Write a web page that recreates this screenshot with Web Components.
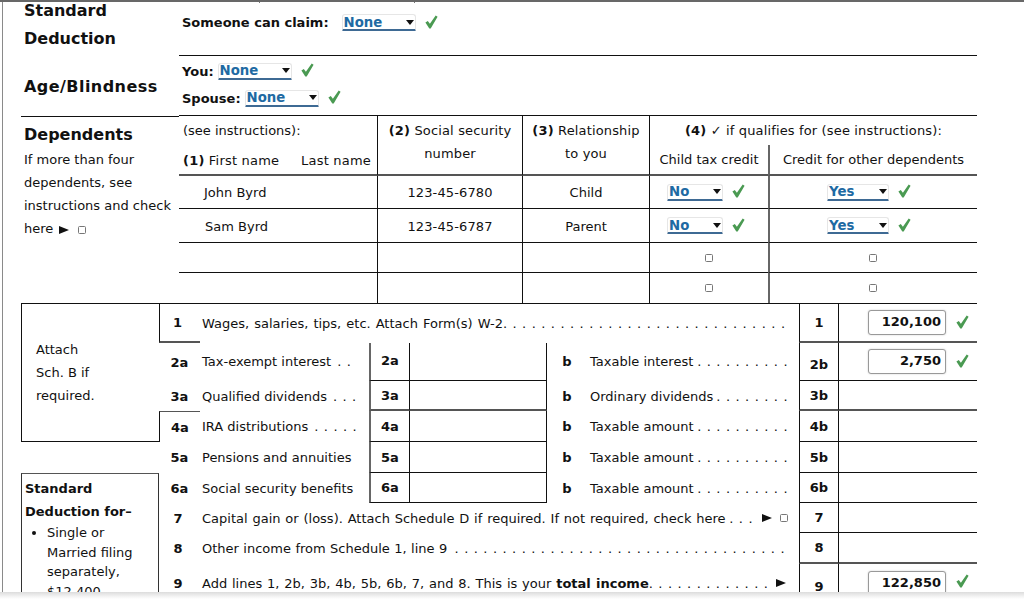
<!DOCTYPE html>
<html lang="en"><head><meta charset="utf-8"><title>Form 1040</title>
<style>
html,body{margin:0;padding:0;background:#fff}
body{font:13px/23px "DejaVu Sans",Verdana,sans-serif;color:#111}
</style></head><body>
<tax-page>
  <form-grid kind="upper">
    <form-cell style="grid-area:1/1/2/2;padding-bottom:8px"><sect-title>Standard<br>Deduction</sect-title></form-cell>
    <form-cell style="grid-area:1/2/2/7;padding-bottom:12px" b="b"><tax-claim>Someone can claim:</tax-claim><tax-select style="width:74px;margin-left:13px">None</tax-select><green-check style="margin-left:9px"></green-check></form-cell>
    <form-cell style="grid-area:2/1/3/2;padding-top:2px"><sect-title style="letter-spacing:.45px">Age/Blindness</sect-title></form-cell>
    <form-cell style="grid-area:2/2/3/7;padding-bottom:2px" b="b">
      <claim-pair><claim-row><tax-claim>You:</tax-claim><tax-select style="width:74px;margin-left:4px">None</tax-select><green-check style="margin-left:9px"></green-check></claim-row>
      <claim-row><tax-claim>Spouse:</tax-claim><tax-select style="width:74px;margin-left:4px">None</tax-select><green-check style="margin-left:9px"></green-check></claim-row></claim-pair>
    </form-cell>

    <form-cell style="grid-area:3/1/8/2" b="t" align="top"><dep-side><sect-title>Dependents</sect-title><span>If more than four<br>dependents, see<br>instructions and check<br>here <tri-mark style="margin-left:2px"></tri-mark><check-box style="margin-left:9px"></check-box></span></dep-side></form-cell>

    <form-cell style="grid-area:3/2/5/3" g="b" align="top"><name-head><span>(see instructions):</span><name-line><span><b>(1)</b>&nbsp;First name</span><span>Last name</span></name-line></name-head></form-cell>
    <form-cell style="grid-area:3/3/5/4" l="1" g="b" center align="top"><col-head><b>(2)</b> Social security<br>number</col-head></form-cell>
    <form-cell style="grid-area:3/4/5/5" l="1" g="b" center align="top"><col-head><b>(3)</b> Relationship<br>to you</col-head></form-cell>
    <form-cell style="grid-area:3/5/4/7;letter-spacing:.15px" l="1" center><b>(4)</b>&nbsp;✓&nbsp;if qualifies for (see instructions):</form-cell>
    <form-cell style="grid-area:4/5/5/6" l="1" g="b" center>Child tax credit</form-cell>
    <form-cell style="grid-area:4/6/5/7" gl="1" g="b" center>Credit for other dependents</form-cell>

    <form-cell style="grid-area:5/2/6/3" b="b" pad="25">John Byrd</form-cell>
    <form-cell style="grid-area:5/3/6/4;letter-spacing:.12px" l="1" b="b" center>123-45-6780</form-cell>
    <form-cell style="grid-area:5/4/6/5" l="1" b="b" center>Child</form-cell>
    <form-cell style="grid-area:5/5/6/6;padding-right:6px" l="1" b="b" center><tax-select style="width:56px">No</tax-select><green-check style="margin-left:9px"></green-check></form-cell>
    <form-cell style="grid-area:5/6/6/7;padding-right:9px" gl="1" b="b" center><tax-select style="width:62px">Yes</tax-select><green-check style="margin-left:9px"></green-check></form-cell>

    <form-cell style="grid-area:6/2/7/3;padding-top:1px" b="b" pad="26">Sam Byrd</form-cell>
    <form-cell style="grid-area:6/3/7/4;padding-top:1px;letter-spacing:.12px" l="1" b="b" center>123-45-6787</form-cell>
    <form-cell style="grid-area:6/4/7/5;padding-top:1px" l="1" b="b" center>Parent</form-cell>
    <form-cell style="grid-area:6/5/7/6;padding-right:6px" l="1" b="b" center><tax-select style="width:56px">No</tax-select><green-check style="margin-left:9px"></green-check></form-cell>
    <form-cell style="grid-area:6/6/7/7;padding-right:9px" gl="1" b="b" center><tax-select style="width:62px">Yes</tax-select><green-check style="margin-left:9px"></green-check></form-cell>

    <form-cell style="grid-area:7/2/8/3" b="b"></form-cell>
    <form-cell style="grid-area:7/3/8/4" l="1" b="b"></form-cell>
    <form-cell style="grid-area:7/4/8/5" l="1" b="b"></form-cell>
    <form-cell style="grid-area:7/5/8/6" l="1" b="b" center><check-box></check-box></form-cell>
    <form-cell style="grid-area:7/6/8/7;padding-right:2px" gl="1" b="b" center><check-box></check-box></form-cell>

    <form-cell style="grid-area:8/2/9/3"></form-cell>
    <form-cell style="grid-area:8/3/9/4" l="1"></form-cell>
    <form-cell style="grid-area:8/4/9/5" l="1"></form-cell>
    <form-cell style="grid-area:8/5/9/6" l="1" center><check-box></check-box></form-cell>
    <form-cell style="grid-area:8/6/9/7;padding-right:2px" gl="1" center><check-box></check-box></form-cell>
  </form-grid>

  <form-grid kind="lower">
    <form-cell style="grid-area:1/1/5/2" b="t l b" pad="14"><span>Attach<br>Sch. B if<br>required.</span></form-cell>
    <form-cell style="grid-area:6/1/11/2" g="t" gx="1" pad="3" align="top"><std-box><b>Standard<br>Deduction for–</b><ul-like>Single or<br>Married filing<br>separately,<br>$12,400</ul-like></std-box></form-cell>

    <form-cell style="grid-area:1/2/2/3;padding-right:5px" b="t l" g="b" center num>1</form-cell>
    <form-cell style="grid-area:1/3/2/8;word-spacing:.9px" b="t" pad="2" fill="14"><span>Wages, salaries, tips, etc. Attach Form(s) W-2</span><dot-run n="30"></dot-run></form-cell>
    <form-cell style="grid-area:1/8/2/9" b="t l r" g="b" center num>1</form-cell>
    <form-cell style="grid-area:1/9/2/10" b="t" g="b" pad="29"><amount-box>120,100</amount-box><green-check style="margin-left:10px"></green-check></form-cell>

    <form-cell style="grid-area:2/2/3/3" center num>2a</form-cell>
    <form-cell style="grid-area:2/3/3/4;padding-bottom:2px" pad="2"><span>Tax-exempt interest</span><dot-run n="2" style="margin-left:6px"></dot-run></form-cell>
    <form-cell style="grid-area:2/4/3/5;padding-bottom:2px" gl="1" b="b" center num>2a</form-cell>
    <form-cell style="grid-area:2/5/3/6" l="1" r="1" b="b"></form-cell>
    <form-cell style="grid-area:2/6/3/7;padding-bottom:2px" center num>b</form-cell>
    <form-cell style="grid-area:2/7/3/8;padding-bottom:2px" pad="3" fill="11"><span>Taxable interest</span><dot-run n="10"></dot-run></form-cell>
    <form-cell style="grid-area:2/8/3/9" b="l r b" center num low>2b</form-cell>
    <form-cell style="grid-area:2/9/3/10" b="b" pad="29"><amount-box>2,750</amount-box><green-check style="margin-left:10px"></green-check></form-cell>

    <form-cell style="grid-area:3/2/4/3" center num>3a</form-cell>
    <form-cell style="grid-area:3/3/4/4" pad="2"><span>Qualified dividends</span><dot-run n="3" style="margin-left:6px"></dot-run></form-cell>
    <form-cell style="grid-area:3/4/4/5" gl="1" g="b" center num>3a</form-cell>
    <form-cell style="grid-area:3/5/4/6" l="1" r="1" g="b"></form-cell>
    <form-cell style="grid-area:3/6/4/7" center num>b</form-cell>
    <form-cell style="grid-area:3/7/4/8" pad="3" fill="11"><span>Ordinary dividends</span><dot-run n="8"></dot-run></form-cell>
    <form-cell style="grid-area:3/8/4/9" b="l r" g="b" center num>3b</form-cell>
    <form-cell style="grid-area:3/9/4/10" g="b"></form-cell>

    <form-cell style="grid-area:4/2/5/3" b="l" g="t" center num>4a</form-cell>
    <form-cell style="grid-area:4/3/5/4" pad="2"><span>IRA distributions</span><dot-run n="5" style="margin-left:6px"></dot-run></form-cell>
    <form-cell style="grid-area:4/4/5/5" gl="1" b="b" center num>4a</form-cell>
    <form-cell style="grid-area:4/5/5/6" l="1" r="1" b="b"></form-cell>
    <form-cell style="grid-area:4/6/5/7" center num>b</form-cell>
    <form-cell style="grid-area:4/7/5/8" pad="3" fill="11"><span>Taxable amount</span><dot-run n="10"></dot-run></form-cell>
    <form-cell style="grid-area:4/8/5/9" b="l r b" center num>4b</form-cell>
    <form-cell style="grid-area:4/9/5/10" b="b"></form-cell>

    <form-cell style="grid-area:5/2/6/3" center num>5a</form-cell>
    <form-cell style="grid-area:5/3/6/4" pad="2">Pensions and annuities</form-cell>
    <form-cell style="grid-area:5/4/6/5" gl="1" b="b" center num>5a</form-cell>
    <form-cell style="grid-area:5/5/6/6" l="1" r="1" b="b"></form-cell>
    <form-cell style="grid-area:5/6/6/7" center num>b</form-cell>
    <form-cell style="grid-area:5/7/6/8" pad="3" fill="11"><span>Taxable amount</span><dot-run n="10"></dot-run></form-cell>
    <form-cell style="grid-area:5/8/6/9" b="l r b" center num>5b</form-cell>
    <form-cell style="grid-area:5/9/6/10" b="b"></form-cell>

    <form-cell style="grid-area:6/2/7/3" center num>6a</form-cell>
    <form-cell style="grid-area:6/3/7/4" pad="2">Social security benefits</form-cell>
    <form-cell style="grid-area:6/4/7/5" gl="1" b="b" center num>6a</form-cell>
    <form-cell style="grid-area:6/5/7/6" l="1" r="1" b="b"></form-cell>
    <form-cell style="grid-area:6/6/7/7" center num>b</form-cell>
    <form-cell style="grid-area:6/7/7/8" pad="3" fill="11"><span>Taxable amount</span><dot-run n="10"></dot-run></form-cell>
    <form-cell style="grid-area:6/8/7/9" b="l r b" center num>6b</form-cell>
    <form-cell style="grid-area:6/9/7/10" b="b"></form-cell>

    <form-cell style="grid-area:7/2/8/3;padding-right:3px" center num>7</form-cell>
    <form-cell style="grid-area:7/3/8/8;word-spacing:.7px" pad="2" fill="11"><span>Capital gain or (loss). Attach Schedule D if required. If not required, check here</span><end-mark><dot-run n="3"></dot-run><tri-mark style="margin-left:1px"></tri-mark><check-box></check-box></end-mark></form-cell>
    <form-cell style="grid-area:7/8/8/9" b="l r b" center num>7</form-cell>
    <form-cell style="grid-area:7/9/8/10" b="b"></form-cell>

    <form-cell style="grid-area:8/2/9/3;padding-right:3px" center num>8</form-cell>
    <form-cell style="grid-area:8/3/9/8;word-spacing:.3px" pad="2" fill="14"><span>Other income from Schedule 1, line 9</span><dot-run n="35"></dot-run></form-cell>
    <form-cell style="grid-area:8/8/9/9" b="l r" g="b" center num>8</form-cell>
    <form-cell style="grid-area:8/9/9/10" g="b"></form-cell>

    <form-cell style="grid-area:9/2/10/3;padding:0 3px 2px 0" center num>9</form-cell>
    <form-cell style="grid-area:9/3/10/8;word-spacing:.7px;padding-bottom:2px" pad="2" fill="14"><span>Add lines 1, 2b, 3b, 4b, 5b, 6b, 7, and 8. This is your <b>total income</b></span><end-mark><dot-run n="13"></dot-run><tri-mark></tri-mark></end-mark></form-cell>
    <form-cell style="grid-area:9/8/10/9" b="l r" center num low>9</form-cell>
    <form-cell style="grid-area:9/9/10/10" pad="29" align="top"><amount-box style="margin-top:7px">122,850</amount-box><green-check style="margin:10px 0 0 10px"></green-check></form-cell>
  </form-grid>
</tax-page>
<script>
function def(name, css, html, init){
  customElements.define(name, class extends HTMLElement{
    constructor(){super();const r=this.attachShadow({mode:'open'});r.innerHTML='<style>'+css+'</style>'+(html||'<slot></slot>');}
    connectedCallback(){ if(init) init(this); }
  });
}
def('tax-page',`
  :host{display:flex;flex-direction:column;position:relative;width:1024px;height:599px;overflow:hidden;box-sizing:border-box;border-top:2px solid #686868;background:#fff}
  .view{height:590px;overflow:hidden;padding-left:2px;flex:none}
  .rule{border-left:1px solid #8a8a8a;padding-left:18px;height:100%;box-sizing:border-box}
  .fade{flex:1;background:linear-gradient(#dcdcdc,#f2f2f2 60%,#fff)}
  .tick{position:absolute;top:0;width:1px;height:1px;background:#777}
`,'<div class="view"><div class="rule"><slot></slot></div></div><div class="fade"></div><i class="tick" style="left:259px"></i><i class="tick" style="left:414px"></i>');
def('form-grid',`
  :host{display:grid;width:956px}
  :host([kind=upper]){grid-template-columns:158px 198px 145px 127px 119px 209px;grid-template-rows:54px 60px 29px 31px 33px 34px 30px 30px}
  :host([kind=lower]){grid-template-columns:138px 41px 169px 40px 138px 40px 212px 40px 138px;grid-template-rows:40px 38px 30px 31px 31px 30px 30px 31px 40px}
`);
def('form-cell',`
  :host{display:flex;align-items:center;box-sizing:border-box;min-width:0;white-space:nowrap}
  :host([align=top]){align-items:flex-start}
  :host([center]){justify-content:center}
  :host([num]){font-weight:700}
  :host([low]){padding-top:5px}
  :host([b~=t]){border-top:1px solid #111}
  :host([b~=b]){border-bottom:1px solid #111}
  :host([b~=l]),:host([l]){border-left:1px solid #111}
  :host([b~=r]),:host([r]){border-right:1px solid #111}
  :host([g~=b]){border-bottom:2px solid #555}
  :host([g~=t]){border-top:1px solid #555}
  :host([gl]){border-left:2px solid #666}
  :host([gx]){border-left:1px solid #333;border-right:1px solid #333}
  :host([fill]){justify-content:space-between}
`,'<slot></slot>',el=>{
  if(el.hasAttribute('pad')) el.style.paddingLeft=el.getAttribute('pad')+'px';
  if(el.hasAttribute('fill')) el.style.paddingRight=el.getAttribute('fill')+'px';
});
def('sect-title',`:host{display:block;font:700 16px/28px "DejaVu Sans",Verdana,sans-serif;padding-left:3px}`);
def('tax-claim',`:host{display:inline-block;font-weight:700;padding-left:3px}`);
def('claim-pair',`:host{display:flex;flex-direction:column;gap:4px}`);
def('claim-row',`:host{display:flex;align-items:center}`);
def('tax-select',`
  :host{display:inline-flex;align-items:center;justify-content:space-between;box-sizing:border-box;height:17px;padding:0 1px 0 1px;color:#1e6aa3;font-weight:700;font-size:13.3px;line-height:15px;border:1px solid #e6e6e6;border-bottom:2px solid #3e6a94;border-radius:3px 3px 1px 1px;background:#fff}
  svg{display:block;flex:none}
`,'<slot></slot><svg width="8" height="5" viewBox="0 0 8 5"><path d="M0 0h8L4 5z" fill="#111"/></svg>');
def('green-check',`:host{display:inline-flex;flex:none;margin-bottom:2px}svg{display:block}`,'<svg width="13" height="14" viewBox="0 0 13 14"><path d="M0.4 7.6 2.8 6 4.9 8.8 10.7 0.6 12.6 1.8 5.7 13.4 4.3 13.4z" fill="#4a9a52"/></svg>');
def('check-box',`:host{display:inline-block;box-sizing:border-box;width:8px;height:8px;border:1px solid #777;border-radius:1.5px;background:#fff;vertical-align:-0.5px}`,' ');
def('tri-mark',`:host{display:inline-block;width:0;height:0;border-left:10px solid #111;border-top:4.5px solid transparent;border-bottom:4.5px solid transparent;vertical-align:-0.5px}`,' ');
def('dep-side',`:host{display:block;padding-top:4px;line-height:23px}::slotted(span){display:block;padding-left:3px;margin-top:-1px}`);
def('name-head',`:host{display:flex;flex-direction:column;gap:7px;padding:3px 6px 0 4px;width:100%;box-sizing:border-box}::slotted(span){display:block}`);
def('name-line',`:host{display:flex;justify-content:space-between;letter-spacing:.2px}`);
def('col-head',`:host{display:block;text-align:center;padding-top:3px;letter-spacing:.15px}`);
def('std-box',`:host{display:block;padding-top:3px}`);
def('ul-like',`:host{display:block;position:relative;line-height:19.5px;padding-left:22px;margin-top:0}
  :host::before{content:"";position:absolute;left:7px;top:8px;width:4px;height:4px;border-radius:50%;background:#111}`);
def('amount-box',`:host{display:inline-block;box-sizing:border-box;width:78px;height:25px;border:1px solid #999;border-radius:3px;box-shadow:0 0 2px #ccc;text-align:right;padding-right:4px;font-weight:700;line-height:22px;flex:none;background:#fff}`);
def('end-mark',`:host{display:inline-flex;align-items:center;gap:8px}`);
def('dot-run',`:host{display:inline-block;letter-spacing:.44px;word-spacing:.44px}`,'<span id="d"></span>',el=>{
  el.shadowRoot.getElementById('d').textContent=Array(+el.getAttribute('n')).fill('.').join(' ');
});
</script>
</body></html>
